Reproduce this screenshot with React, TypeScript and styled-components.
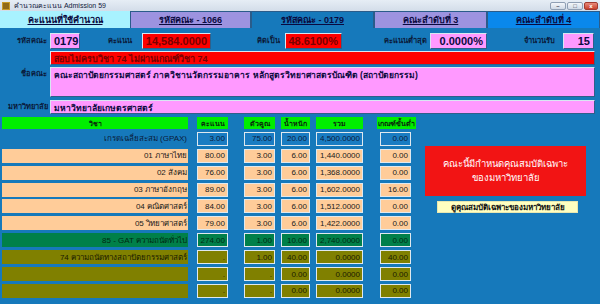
import React from "react";
import styled, { createGlobalStyle, css } from "styled-components";

const Global = createGlobalStyle`
  html, body { margin: 0; padding: 0; background: #1679bb; }
  body { font-family: "Liberation Sans", "DejaVu Sans", sans-serif; }
  * { box-sizing: border-box; }
`;

const Window = styled.div`
  width: 600px;
  height: 304px;
  overflow: hidden;
  background: #1679bb;
  display: flex;
  flex-direction: column;
`;

const TitleBar = styled.div`
  height: 11px;
  background: linear-gradient(#e6edf5, #d3dde9);
  display: flex;
  align-items: center;
  padding: 0 2px;
  gap: 4px;
  font-size: 7px;
  color: #10203a;
`;

const TitleText = styled.span`
  flex: 1;
  line-height: 11px;
  white-space: nowrap;
`;

const WinButtons = styled.div`
  display: flex;
  gap: 1px;
  align-items: center;
`;

const WinBtn = styled.div<{ $close?: boolean }>`
  width: ${(p) => (p.$close ? 14 : 16)}px;
  height: 8px;
  border: 1px solid ${(p) => (p.$close ? "#a03a30" : "#8f9fb4")};
  border-radius: 2px;
  background: ${(p) =>
    p.$close ? "linear-gradient(#e88a7a, #c8402c)" : "linear-gradient(#f4f7fb, #cfd9e6)"};
  display: flex;
  align-items: center;
  justify-content: center;
  font-size: 6px;
  line-height: 6px;
  color: ${(p) => (p.$close ? "#fff" : "#334")};
  font-weight: bold;
`;

const TabBar = styled.div`
  height: 17px;
  display: flex;
`;

const tabColors: Record<string, string> = {
  cyan: "#a8f2ff",
  lav: "#9d93e0",
  blue: "#1679bb",
  bright: "#0a88ec",
};

const Tab = styled.div<{ $w: number; $tone: string }>`
  width: ${(p) => p.$w}px;
  height: 17px;
  background: ${(p) => tabColors[p.$tone]};
  border: 1px solid ${(p) => (p.$tone === "cyan" ? "#a8f2ff" : "#2a5c8a")};
  border-bottom: none;
  display: flex;
  align-items: center;
  justify-content: center;
  font-size: 9px;
  font-weight: bold;
  text-decoration: underline;
  color: #0a0a40;
  white-space: nowrap;
`;

const Body = styled.div`
  display: flex;
  flex-direction: column;
  padding: 5px 5px 0 2px;
`;

const FieldRow = styled.div<{ $h: number; $mt?: number }>`
  display: flex;
  align-items: ${(p) => (p.$h > 20 ? "flex-start" : "center")};
  height: ${(p) => p.$h}px;
  margin-top: ${(p) => p.$mt ?? 0}px;
`;

const Label = styled.div<{ $w: number; $pad?: number }>`
  width: ${(p) => p.$w}px;
  flex: none;
  text-align: right;
  padding-right: ${(p) => p.$pad ?? 3}px;
  font-size: 7.5px;
  font-weight: bold;
  color: #0a1a3a;
  white-space: nowrap;
  line-height: 14px;
`;

const boxTones: Record<string, ReturnType<typeof css>> = {
  pink: css`
    background: #ff99ff;
    color: #0a0a40;
  `,
  red: css`
    background: #ff0000;
    color: #7a0000;
  `,
};

const ValueBox = styled.div<{ $w?: number; $tone: "pink" | "red"; $size?: number; $align?: string }>`
  ${(p) => boxTones[p.$tone]};
  width: ${(p) => (p.$w ? `${p.$w}px` : "auto")};
  flex: ${(p) => (p.$w ? "none" : "1")};
  height: 100%;
  border: 1px solid #d8e6f2;
  border-right-color: #2f5f8a;
  border-bottom-color: #2f5f8a;
  font-size: ${(p) => p.$size ?? 11}px;
  font-weight: bold;
  text-align: ${(p) => p.$align ?? "right"};
  padding: 0 3px;
  display: flex;
  align-items: ${(p) => (p.$size && p.$size < 10 ? "flex-start" : "center")};
  justify-content: ${(p) => (p.$align === "left" ? "flex-start" : "flex-end")};
  white-space: nowrap;
  overflow: hidden;
`;

const Table = styled.div`
  display: grid;
  grid-template-columns: 186px 9px 31px 16px 31px 6px 29px 6px 47px 17px 31px 14px 161px;
  grid-template-rows: 12px repeat(10, 14px);
  row-gap: 2.9px;
  margin-top: 3px;
`;

const Head = styled.div<{ $col: number; $wide?: boolean }>`
  grid-column: ${(p) => p.$col};
  grid-row: 1;
  background: #00ee00;
  color: #0a2a0a;
  font-size: 7px;
  font-weight: bold;
  display: flex;
  align-items: center;
  justify-content: center;
  white-space: nowrap;
  margin: ${(p) => (p.$wide ? "0 -5px 0 -3px" : "0")};
`;

type Tone = "blue" | "orange" | "green" | "olive";

const cellTones: Record<Tone, string> = {
  blue: "#1a7cc2",
  orange: "#ffcc99",
  green: "#00804a",
  olive: "#808000",
};

const textTones: Record<Tone, string> = {
  blue: "#0a1a3a",
  orange: "#1a1a1a",
  green: "#002a14",
  olive: "#1a1a00",
};

const SubjectLabel = styled.div<{ $tone: Tone; $row: number }>`
  grid-column: 1;
  grid-row: ${(p) => p.$row};
  background: ${(p) => (p.$tone === "blue" ? "transparent" : cellTones[p.$tone])};
  color: ${(p) => textTones[p.$tone]};
  font-size: 8px;
  display: flex;
  align-items: center;
  justify-content: flex-end;
  padding-right: 1px;
  white-space: nowrap;
  overflow: hidden;
`;

const Cell = styled.div<{ $tone: Tone; $col: number; $row: number }>`
  grid-column: ${(p) => p.$col};
  grid-row: ${(p) => p.$row};
  background: ${(p) => cellTones[p.$tone]};
  color: ${(p) => textTones[p.$tone]};
  border: 1.5px solid #dfe9ef;
  font-size: 8px;
  display: flex;
  align-items: center;
  justify-content: flex-end;
  padding-right: 2px;
  white-space: nowrap;
  overflow: hidden;
`;

const Notice = styled.div`
  grid-column: 13;
  grid-row: 3 / span 3;
  margin: -3px 0 1px 0;
  background: #f21414;
  color: #ffffff;
  font-size: 9.5px;
  display: flex;
  flex-direction: column;
  align-items: center;
  justify-content: center;
  line-height: 14px;
  text-align: center;
`;

const SpecButton = styled.div`
  grid-column: 13;
  grid-row: 6;
  align-self: end;
  margin-left: 12px;
  width: 141px;
  height: 12px;
  background: #ffffc0;
  border: 1px solid #e8e8b0;
  color: #111;
  font-size: 8px;
  font-weight: bold;
  display: flex;
  align-items: center;
  justify-content: center;
  white-space: nowrap;
`;

const AppIcon = () => (
  <svg width="8" height="8" viewBox="0 0 8 8">
    <rect x="0" y="0" width="8" height="8" fill="#c89a2a" />
    <rect x="1" y="1.5" width="6" height="1" fill="#5a3a08" />
    <rect x="1" y="3.5" width="6" height="1" fill="#5a3a08" />
    <rect x="1" y="5.5" width="6" height="1" fill="#5a3a08" />
  </svg>
);

const rows: { label: string; tone: Tone; v: string[] }[] = [
  { label: "เกรดเฉลี่ยสะสม (GPAX)", tone: "blue", v: ["3.00", "75.00", "20.00", "4,500.0000", "0.00"] },
  { label: "01 ภาษาไทย", tone: "orange", v: ["80.00", "3.00", "6.00", "1,440.0000", "0.00"] },
  { label: "02 สังคม", tone: "orange", v: ["76.00", "3.00", "6.00", "1,368.0000", "0.00"] },
  { label: "03 ภาษาอังกฤษ", tone: "orange", v: ["89.00", "3.00", "6.00", "1,602.0000", "16.00"] },
  { label: "04 คณิตศาสตร์", tone: "orange", v: ["84.00", "3.00", "6.00", "1,512.0000", "0.00"] },
  { label: "05 วิทยาศาสตร์", tone: "orange", v: ["79.00", "3.00", "6.00", "1,422.0000", "0.00"] },
  { label: "85 - GAT ความถนัดทั่วไป", tone: "green", v: ["274.00", "1.00", "10.00", "2,740.0000", "0.00"] },
  { label: "74 ความถนัดทางสถาปัตยกรรมศาสตร์", tone: "olive", v: [".", "1.00", "40.00", "0.0000", "40.00"] },
  { label: "", tone: "olive", v: [".", ".", "0.00", "0.0000", "0.00"] },
  { label: "", tone: "olive", v: [".", ".", "0.00", "0.0000", "0.00"] },
];

const valueCols = [3, 5, 7, 9, 11];

export default function App() {
  return (
    <Window>
      <Global />
      <TitleBar>
        <AppIcon />
        <TitleText>คำนวณคะแนน Admission 59</TitleText>
        <WinButtons>
          <WinBtn>–</WinBtn>
          <WinBtn>□</WinBtn>
          <WinBtn $close>x</WinBtn>
        </WinButtons>
      </TitleBar>
      <TabBar>
        <Tab $w={130} $tone="cyan">คะแนนที่ใช้คำนวณ</Tab>
        <Tab $w={121} $tone="lav">รหัสคณะ - 1066</Tab>
        <Tab $w={123} $tone="blue">รหัสคณะ - 0179</Tab>
        <Tab $w={113} $tone="lav">คณะลำดับที่ 3</Tab>
        <Tab $w={113} $tone="bright">คณะลำดับที่ 4</Tab>
      </TabBar>
      <Body>
        <FieldRow $h={16}>
          <Label $w={48}>รหัสคณะ</Label>
          <ValueBox $w={30} $tone="pink" $align="left">0179</ValueBox>
          <Label $w={62} $pad={10}>คะแนน</Label>
          <ValueBox $w={69} $tone="red">14,584.0000</ValueBox>
          <Label $w={74} $pad={5}>คิดเป็น</Label>
          <ValueBox $w={57} $tone="red">48.6100%</ValueBox>
          <Label $w={88} $pad={3}>คะแนนต่ำสุด</Label>
          <ValueBox $w={57} $tone="pink">0.0000%</ValueBox>
          <Label $w={76} $pad={8}>จำนวนรับ</Label>
          <ValueBox $w={31} $tone="pink">15</ValueBox>
        </FieldRow>
        <FieldRow $h={14} $mt={2}>
          <Label $w={48} />
          <ValueBox $tone="red" $size={9} $align="left">
            สอบไม่ครบวิชา 74 ไม่ผ่านเกณฑ์วิชา 74
          </ValueBox>
        </FieldRow>
        <FieldRow $h={30} $mt={2}>
          <Label $w={48}>ชื่อคณะ</Label>
          <ValueBox $tone="pink" $size={8.5} $align="left">
            คณะสถาปัตยกรรมศาสตร์ ภาควิชานวัตกรรมอาคาร หลักสูตรวิทยาศาสตรบัณฑิต (สถาปัตยกรรม)
          </ValueBox>
        </FieldRow>
        <FieldRow $h={14} $mt={3}>
          <Label $w={48} $pad={2}>มหาวิทยาลัย</Label>
          <ValueBox $tone="pink" $size={8.5} $align="left">
            มหาวิทยาลัยเกษตรศาสตร์
          </ValueBox>
        </FieldRow>
        <Table>
          <Head $col={1}>วิชา</Head>
          <Head $col={3}>คะแนน</Head>
          <Head $col={5}>ตัวคูณ</Head>
          <Head $col={7}>น้ำหนัก</Head>
          <Head $col={9}>รวม</Head>
          <Head $col={11} $wide>เกณฑ์ขั้นต่ำ</Head>
          {rows.map((r, i) => (
            <React.Fragment key={i}>
              <SubjectLabel $tone={r.tone} $row={i + 2}>{r.label}</SubjectLabel>
              {r.v.map((v, j) => (
                <Cell key={j} $tone={r.tone} $col={valueCols[j]} $row={i + 2}>
                  {v}
                </Cell>
              ))}
            </React.Fragment>
          ))}
          <Notice>
            <span>คณะนี้มีกำหนดคุณสมบัติเฉพาะ</span>
            <span>ของมหาวิทยาลัย</span>
          </Notice>
          <SpecButton>ดูคุณสมบัติเฉพาะของมหาวิทยาลัย</SpecButton>
        </Table>
      </Body>
    </Window>
  );
}
